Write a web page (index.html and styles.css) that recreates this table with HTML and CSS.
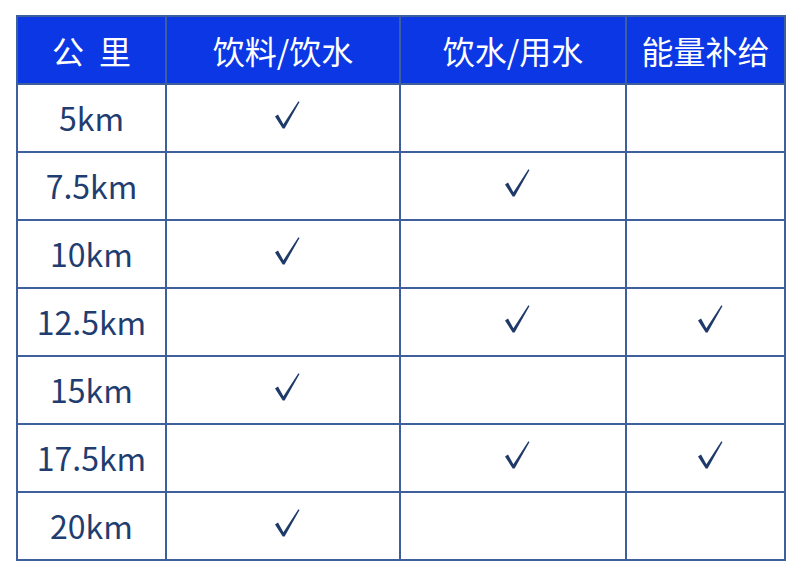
FILE: index.html
```html
<!DOCTYPE html>
<html lang="zh">
<head>
<meta charset="utf-8">
<title>补给站</title>
<link rel="stylesheet" href="styles.css">
</head>
<body>
<div class="page">
  <div class="grid">
    <div class="th th-km">公 里</div>
    <div class="th">饮料/饮水</div>
    <div class="th">饮水/用水</div>
    <div class="th">能量补给</div>

    <div class="td km">5km</div>
    <div class="td ck"><svg class="check" viewBox="0 0 26 30" width="26" height="30"><path d="M1 16.5 L4 14.5 L9.4 24.2 L24.4 1.2 L25.5 2 L10.6 28.4 L8.7 28.4 Z"/></svg></div>
    <div class="td ck"></div>
    <div class="td ck"></div>

    <div class="td km">7.5km</div>
    <div class="td ck"></div>
    <div class="td ck"><svg class="check" viewBox="0 0 26 30" width="26" height="30"><path d="M1 16.5 L4 14.5 L9.4 24.2 L24.4 1.2 L25.5 2 L10.6 28.4 L8.7 28.4 Z"/></svg></div>
    <div class="td ck"></div>

    <div class="td km">10km</div>
    <div class="td ck"><svg class="check" viewBox="0 0 26 30" width="26" height="30"><path d="M1 16.5 L4 14.5 L9.4 24.2 L24.4 1.2 L25.5 2 L10.6 28.4 L8.7 28.4 Z"/></svg></div>
    <div class="td ck"></div>
    <div class="td ck"></div>

    <div class="td km">12.5km</div>
    <div class="td ck"></div>
    <div class="td ck"><svg class="check" viewBox="0 0 26 30" width="26" height="30"><path d="M1 16.5 L4 14.5 L9.4 24.2 L24.4 1.2 L25.5 2 L10.6 28.4 L8.7 28.4 Z"/></svg></div>
    <div class="td ck"><svg class="check" viewBox="0 0 26 30" width="26" height="30"><path d="M1 16.5 L4 14.5 L9.4 24.2 L24.4 1.2 L25.5 2 L10.6 28.4 L8.7 28.4 Z"/></svg></div>

    <div class="td km">15km</div>
    <div class="td ck"><svg class="check" viewBox="0 0 26 30" width="26" height="30"><path d="M1 16.5 L4 14.5 L9.4 24.2 L24.4 1.2 L25.5 2 L10.6 28.4 L8.7 28.4 Z"/></svg></div>
    <div class="td ck"></div>
    <div class="td ck"></div>

    <div class="td km">17.5km</div>
    <div class="td ck"></div>
    <div class="td ck"><svg class="check" viewBox="0 0 26 30" width="26" height="30"><path d="M1 16.5 L4 14.5 L9.4 24.2 L24.4 1.2 L25.5 2 L10.6 28.4 L8.7 28.4 Z"/></svg></div>
    <div class="td ck"><svg class="check" viewBox="0 0 26 30" width="26" height="30"><path d="M1 16.5 L4 14.5 L9.4 24.2 L24.4 1.2 L25.5 2 L10.6 28.4 L8.7 28.4 Z"/></svg></div>

    <div class="td km">20km</div>
    <div class="td ck"><svg class="check" viewBox="0 0 26 30" width="26" height="30"><path d="M1 16.5 L4 14.5 L9.4 24.2 L24.4 1.2 L25.5 2 L10.6 28.4 L8.7 28.4 Z"/></svg></div>
    <div class="td ck"></div>
    <div class="td ck"></div>
  </div>
</div>
</body>
</html>
```

FILE: styles.css
```css
html, body {
  margin: 0;
  padding: 0;
  background: #ffffff;
}

.page {
  padding: 15px 0 0 16px;
  font-family: "Noto Sans CJK SC", "Noto Sans", sans-serif;
}

.grid {
  display: grid;
  grid-template-columns: 147px 232px 224px 157px;
  grid-auto-rows: 66px;
  gap: 2px;
  padding: 2px;
  width: max-content;
  background: #3d5f9c;
}

.th {
  background: #0b37e4;
  color: #ffffff;
  font-size: 32px;
  display: flex;
  align-items: center;
  justify-content: center;
  line-height: 1;
}

.th-km {
  word-spacing: 8px;
}

.td {
  background: #ffffff;
  display: flex;
  align-items: center;
  justify-content: center;
}

.km {
  color: #1f3d70;
  font-size: 32px;
  line-height: 1;
  padding-bottom: 2px;
}

.ck {
  padding-left: 8px;
  padding-bottom: 6px;
}

.check {
  display: block;
  fill: #1f3a68;
}
```
